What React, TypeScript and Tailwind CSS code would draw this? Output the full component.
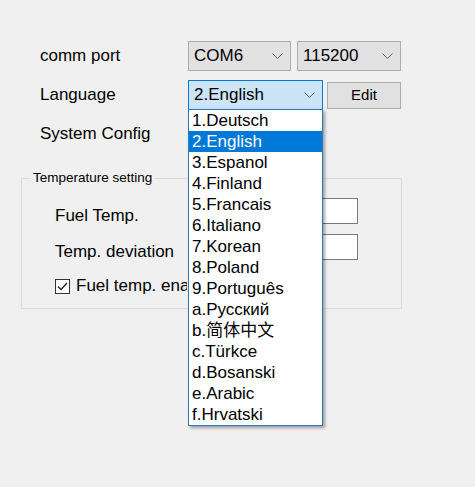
import type { ReactNode } from 'react';

const languages = [
  '1.Deutsch',
  '2.English',
  '3.Espanol',
  '4.Finland',
  '5.Francais',
  '6.Italiano',
  '7.Korean',
  '8.Poland',
  '9.Português',
  'a.Русский',
  'b.简体中文',
  'c.Türkce',
  'd.Bosanski',
  'e.Arabic',
  'f.Hrvatski',
];

function Chevron() {
  return (
    <svg width="11" height="7" viewBox="0 0 11 7" className="shrink-0">
      <polyline points="0.5,0.5 5.5,5.5 10.5,0.5" fill="none" stroke="#606060" strokeWidth="1" />
    </svg>
  );
}

function Combo({ value, className }: { value: string; className: string }) {
  return (
    <div className={`flex h-[30px] items-center justify-between border pl-[5px] pr-[7px] ${className}`}>
      <span>{value}</span>
      <Chevron />
    </div>
  );
}

function Row({ label, children }: { label: string; children?: ReactNode }) {
  return (
    <div className="flex h-[30px] items-center">
      <span className="w-[148px] shrink-0">{label}</span>
      {children}
    </div>
  );
}

export default function App() {
  return (
    <div
      className="relative h-[487px] w-[475px] overflow-hidden bg-[#f0f0f0] text-[17px] text-black"
      style={{ fontFamily: '"Liberation Sans", Arial, "Noto Sans CJK SC", sans-serif' }}
    >
      <div className="flex flex-col gap-[9px] pl-[40px] pt-[41px]">
        <Row label="comm port">
          <Combo value="COM6" className="w-[103px] border-[#adadad] bg-[#e1e1e1]" />
          <Combo value="115200" className="ml-[6px] w-[104px] border-[#adadad] bg-[#e1e1e1]" />
        </Row>
        <Row label="Language">
          <Combo value="2.English" className="w-[135px] border-[#0078d7] bg-[#cce4f7]" />
          <button className="ml-[4px] h-[27px] w-[74px] border border-[#adadad] bg-[#e1e1e1] text-[15px]">
            Edit
          </button>
        </Row>
        <Row label="System Config" />
      </div>

      <fieldset className="ml-[21px] mt-[21px] w-[381px] border border-[#dcdcdc] pb-[12px]">
        <legend className="ml-[9px] px-[2px] text-[13.5px] leading-[16px]">Temperature setting</legend>
        <div className="flex flex-col gap-[10px] pl-[33px] pr-[43px] pt-[12px]">
          <div className="flex h-[26px] items-start">
            <span className="flex-1 pt-[8px] leading-[20px]">Fuel Temp.</span>
            <div className="h-[26px] w-[100px] border border-[#7a7a7a] bg-white" />
          </div>
          <div className="flex h-[26px] items-start">
            <span className="flex-1 pt-[8px] leading-[20px]">Temp. deviation</span>
            <div className="h-[26px] w-[100px] border border-[#7a7a7a] bg-white" />
          </div>
          <div className="flex h-[26px] items-center pt-[6px]">
            <span className="flex h-[15px] w-[15px] items-center justify-center border border-[#333] bg-white">
              <svg width="11" height="9" viewBox="0 0 11 9">
                <polyline points="1,4.5 4,7.5 10,1" fill="none" stroke="#222" strokeWidth="1.4" />
              </svg>
            </span>
            <span className="ml-[6px] max-w-[111px] overflow-hidden whitespace-nowrap">Fuel temp. enable</span>
          </div>
        </div>
      </fieldset>

      <ul className="absolute left-[188px] top-[109px] w-[135px] border border-[#2b79c2] bg-white shadow-[2px_2px_3px_rgba(0,0,0,0.35)]">
        {languages.map((lang) => (
          <li
            key={lang}
            className={`flex h-[21px] items-center pl-[3px] ${
              lang === '2.English' ? 'bg-[#0078d7] text-white' : 'text-black'
            }`}
          >
            {lang}
          </li>
        ))}
      </ul>
    </div>
  );
}
